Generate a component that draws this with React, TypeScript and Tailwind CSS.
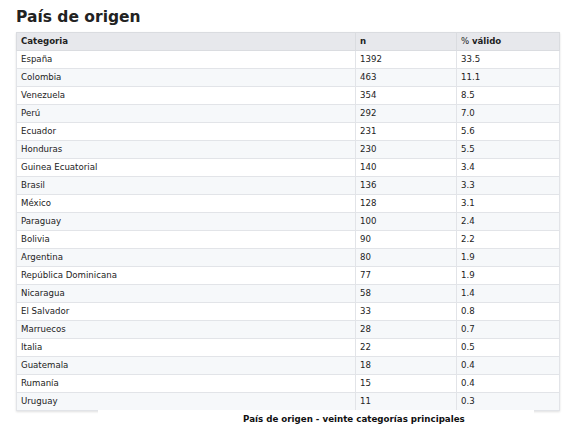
const rows: [string, string, string][] = [
  ["España", "1392", "33.5"],
  ["Colombia", "463", "11.1"],
  ["Venezuela", "354", "8.5"],
  ["Perú", "292", "7.0"],
  ["Ecuador", "231", "5.6"],
  ["Honduras", "230", "5.5"],
  ["Guinea Ecuatorial", "140", "3.4"],
  ["Brasil", "136", "3.3"],
  ["México", "128", "3.1"],
  ["Paraguay", "100", "2.4"],
  ["Bolivia", "90", "2.2"],
  ["Argentina", "80", "1.9"],
  ["República Dominicana", "77", "1.9"],
  ["Nicaragua", "58", "1.4"],
  ["El Salvador", "33", "0.8"],
  ["Marruecos", "28", "0.7"],
  ["Italia", "22", "0.5"],
  ["Guatemala", "18", "0.4"],
  ["Rumanía", "15", "0.4"],
  ["Uruguay", "11", "0.3"],
];

export default function App() {
  return (
    <div
      className="w-[577px] h-[427px] bg-white overflow-hidden px-4 pt-[6px]"
      style={{ fontFamily: '"DejaVu Sans", sans-serif' }}
    >
      <h1 className="text-[15.5px] font-bold text-[#222] leading-[22px] mb-[4px]">País de origen</h1>

      <table className="w-[543px] border-collapse table-fixed text-[8.6px] text-[#222] shadow-[0_1px_2px_rgba(0,0,0,0.12)]">
        <colgroup>
          <col className="w-[339px]" />
          <col className="w-[101px]" />
          <col className="w-[103px]" />
        </colgroup>
        <thead>
          <tr className="bg-[#e7e8ec] h-[18px]">
            <th className="text-left font-bold px-[4px] border border-[#dadce0]">Categoria</th>
            <th className="text-left font-bold px-[4px] border border-[#dadce0]">n</th>
            <th className="text-left px-[4px] border border-[#dadce0]">
              <span className="font-normal">% </span>válido
            </th>
          </tr>
        </thead>
        <tbody>
          {rows.map(([c, n, p], i) => (
            <tr key={c} className={`h-[18px] ${i % 2 === 1 ? "bg-[#f6f8fa]" : "bg-white"}`}>
              <td className="px-[4px] border border-[#e2e4e8]">{c}</td>
              <td className="px-[4px] border border-[#e2e4e8]">{n}</td>
              <td className="px-[4px] border border-[#e2e4e8]">{p}</td>
            </tr>
          ))}
        </tbody>
      </table>

      <div className="relative -mt-[1px] ml-[82px] w-[436px] bg-white pt-[3px] pl-[145px] text-[8.7px] font-bold text-[#111] whitespace-nowrap">
        País de origen - veinte categorías principales
      </div>
    </div>
  );
}
